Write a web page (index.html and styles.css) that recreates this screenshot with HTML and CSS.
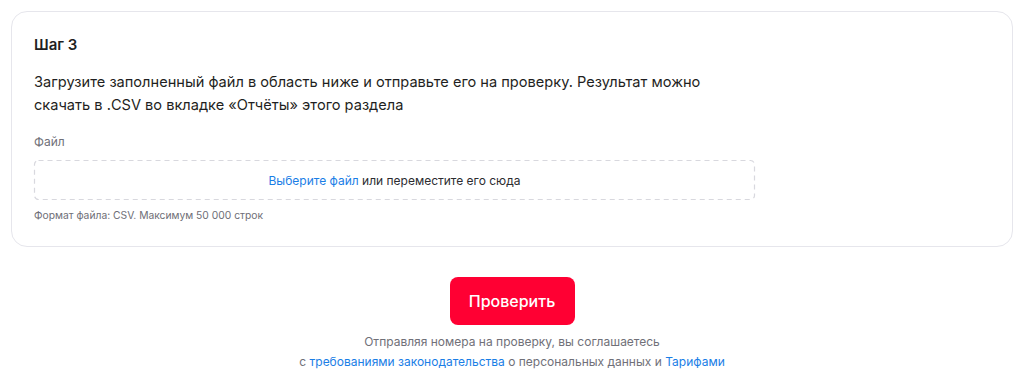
FILE: index.html
```html
<!DOCTYPE html>
<html lang="ru">
<head>
  <meta charset="UTF-8" />
  <title>Шаг 3</title>
  <link rel="stylesheet" href="styles.css">
</head>
<body>
  <section class="card">
    <div class="card-inner">
      <h2 class="step-title">Шаг 3</h2>
      <p class="step-text">Загрузите заполненный файл в область ниже и отправьте его на проверку. Результат можно скачать в .CSV во вкладке «Отчёты» этого раздела</p>
      <div class="field-label">Файл</div>
      <div class="dropzone">
        <svg class="dropzone-border" preserveAspectRatio="none">
          <rect x="0.5" y="0.5" rx="4" ry="4" width="calc(100% - 1px)" height="calc(100% - 1px)" />
        </svg>
        <a href="#" class="link">Выберите файл</a>&nbsp;или переместите его сюда
      </div>
      <div class="hint">Формат файла: CSV. Максимум 50 000 строк</div>
    </div>
  </section>

  <div class="actions">
    <button class="check-btn">Проверить</button>
    <p class="agree">
      Отправляя номера на проверку, вы соглашаетесь<br>
      с <a href="#" class="link">требованиями законодательства</a> о персональных данных и <a href="#" class="link">Тарифами</a>
    </p>
  </div>
</body>
</html>
```

FILE: styles.css
```css
body {
  margin: 0;
  padding: 11px 11px 0 11px;
  font-family: Inter, 'Liberation Sans', sans-serif;
  color: #1f1f22;
  background: #ffffff;
}
.card {
  border: 1px solid #e6e6ec;
  border-radius: 16px;
  padding: 23px 22px 24px 22px;
}
.card-inner {
  max-width: 721px;
}
.step-title {
  margin: 0;
  font-size: 15px;
  line-height: 20px;
  font-weight: 600;
}
.step-text {
  margin: 16px 0 0 0;
  font-size: 14.6px;
  line-height: 23px;
}
.field-label {
  margin-top: 17px;
  font-size: 12px;
  line-height: 16px;
  color: #707078;
}
.dropzone {
  position: relative;
  margin-top: 10px;
  height: 40px;
  display: flex;
  justify-content: center;
  align-items: center;
  font-size: 12px;
  color: #2c2c30;
}
.dropzone-border {
  position: absolute;
  top: 0;
  left: 0;
  width: 100%;
  height: 100%;
  overflow: visible;
}
.dropzone-border rect {
  width: calc(100% - 1px);
  height: calc(100% - 1px);
  fill: none;
  stroke: #d8d8de;
  stroke-width: 1.2;
  stroke-dasharray: 5 4;
}
.link {
  color: #1a7ee6;
  text-decoration: none;
}
.hint {
  margin-top: 8px;
  font-size: 10.3px;
  line-height: 14px;
  color: #6e6e76;
}
.actions {
  display: flex;
  flex-direction: column;
  align-items: center;
  padding-top: 30px;
}
.check-btn {
  width: 125px;
  height: 48px;
  border: none;
  border-radius: 8px;
  background-color: #ff0033;
  color: white;
  font-family: inherit;
  font-size: 16px;
  font-weight: 500;
  cursor: pointer;
}
.agree {
  margin: 7px 0 0 0;
  text-align: center;
  font-size: 12px;
  line-height: 20px;
  color: #707078;
}
```
